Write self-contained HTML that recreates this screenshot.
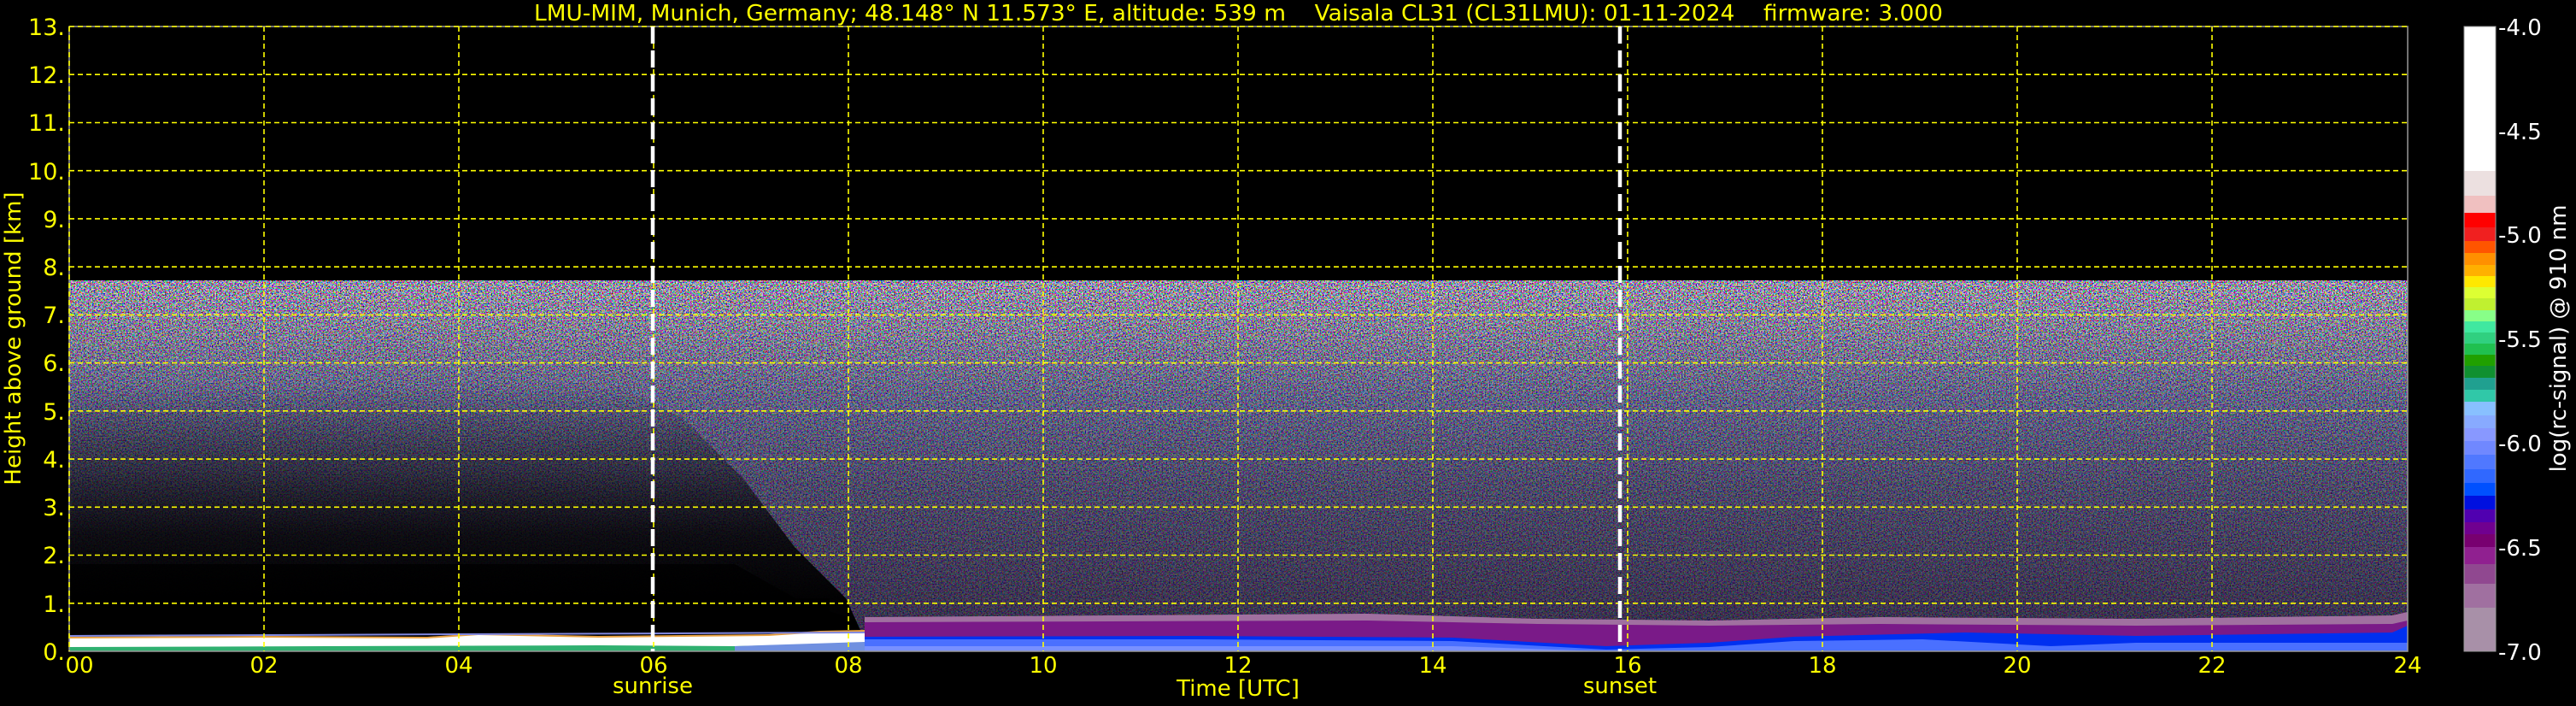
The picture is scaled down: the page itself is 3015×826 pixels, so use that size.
<!DOCTYPE html>
<html><head><meta charset="utf-8"><style>
html,body{margin:0;padding:0;background:#000;width:3015px;height:826px;overflow:hidden}
svg{display:block}
text{font-family:"DejaVu Sans","Liberation Sans",sans-serif}
</style></head><body>
<svg width="3015" height="826" viewBox="0 0 3015 826" xmlns="http://www.w3.org/2000/svg">
<defs>
<filter id="nz" x="81" y="328" width="2737" height="420" filterUnits="userSpaceOnUse" primitiveUnits="userSpaceOnUse">
<feTurbulence type="fractalNoise" baseFrequency="0.6" numOctaves="2" seed="11" result="t"/>
<feColorMatrix type="matrix" values="5 -0.5 -0.5 0 -1.5  -0.5 5 -0.5 0 -1.55  -0.5 -0.5 5 0 -1.4  0 0 0 0 1"/>
</filter>
<linearGradient id="dv" x1="0" y1="328" x2="0" y2="725" gradientUnits="userSpaceOnUse">
<stop offset="0" stop-color="#000" stop-opacity="0.05"/>
<stop offset="0.3" stop-color="#000" stop-opacity="0.25"/>
<stop offset="0.6" stop-color="#000" stop-opacity="0.42"/>
<stop offset="1" stop-color="#000" stop-opacity="0.55"/>
</linearGradient>
<linearGradient id="dl" x1="0" y1="450" x2="0" y2="700" gradientUnits="userSpaceOnUse">
<stop offset="0" stop-color="#000" stop-opacity="0"/>
<stop offset="0.4" stop-color="#000" stop-opacity="0.4"/>
<stop offset="0.7" stop-color="#000" stop-opacity="0.8"/>
<stop offset="1" stop-color="#000" stop-opacity="0.97"/>
</linearGradient>
<linearGradient id="tint" x1="0" y1="328" x2="0" y2="725" gradientUnits="userSpaceOnUse">
<stop offset="0" stop-color="#8080b0" stop-opacity="0.05"/>
<stop offset="0.35" stop-color="#5060d0" stop-opacity="0.3"/>
<stop offset="1" stop-color="#6040b0" stop-opacity="0.45"/>
</linearGradient>
</defs>

<!-- noise data -->
<rect x="81" y="328" width="2737" height="420" fill="#000" filter="url(#nz)"/>
<rect x="81" y="328" width="2737" height="420" fill="url(#tint)"/>
<rect x="81" y="328" width="2737" height="420" fill="url(#dv)"/>
<!-- dark lower-left region -->
<path d="M81,450 L720,450 L800,490 L870,560 L930,640 L990,700 L1012,748 L81,748 Z" fill="url(#dl)"/>
<path d="M81,660 L860,660 L940,705 L1000,725 L1012,748 L81,748 Z" fill="#000" opacity="0.75"/>
<rect x="81" y="700" width="890" height="50" fill="#000"/>

<!-- bottom layers left: white aerosol band -->
<path d="M81,745 L300,744 L500,745 L560,741 L700,744 L900,742 L960,738 L1012,737 L1012,762 L81,762 Z" fill="#e8a040"/>
<path d="M81,747 L300,746 L500,747 L560,743 L700,746 L900,744 L960,740 L1012,739 L1012,757 L81,757 Z" fill="#ffffff"/>
<path d="M81,757 L700,755 L860,756 L1012,752 L1012,762 L81,762 Z" fill="#30b070"/>
<path d="M860,756 L1012,751 L1012,762 L860,762 Z" fill="#7090e0"/>
<line x1="81" y1="744" x2="1012" y2="740" stroke="#8088e0" stroke-width="2"/>

<!-- right layers: purple + blue -->
<path d="M1012,722 L1300,720 L1600,718 L1800,724 L2000,726 L2200,722 L2500,724 L2800,720 L2818,716 L2818,762 L1012,762 Z" fill="#a070a0"/>
<path d="M1012,728 L1300,727 L1600,726 L1800,730 L2000,732 L2200,730 L2500,732 L2800,730 L2818,726 L2818,762 L1012,762 Z" fill="#7a1a88"/>
<path d="M1012,745 L1400,744 L1700,746 L1880,756 L2000,752 L2100,745 L2300,740 L2500,744 L2800,740 L2818,732 L2818,762 L1012,762 Z" fill="#0030f0"/>
<path d="M1012,748 L1400,748 L1700,750 L1880,760 L2000,757 L2100,750 L2250,748 L2400,756 L2500,752 L2818,752 L2818,762 L1012,762 Z" fill="#4a70ff"/>
<path d="M1012,756 L1700,756 L1880,762 L1012,762 Z" fill="#7890ff"/>

<!-- frame -->
<rect x="81" y="31" width="2737" height="731" fill="none" stroke="#999" stroke-width="1.5"/>

<!-- grid -->
<g stroke="#ffff00" stroke-width="1.6" stroke-dasharray="6,4" fill="none">
<line x1="81" y1="31" x2="2818" y2="31"/>
<line x1="81" y1="87.2" x2="2818" y2="87.2"/>
<line x1="81" y1="143.5" x2="2818" y2="143.5"/>
<line x1="81" y1="199.7" x2="2818" y2="199.7"/>
<line x1="81" y1="255.9" x2="2818" y2="255.9"/>
<line x1="81" y1="312.2" x2="2818" y2="312.2"/>
<line x1="81" y1="368.4" x2="2818" y2="368.4"/>
<line x1="81" y1="424.6" x2="2818" y2="424.6"/>
<line x1="81" y1="480.8" x2="2818" y2="480.8"/>
<line x1="81" y1="537.1" x2="2818" y2="537.1"/>
<line x1="81" y1="593.3" x2="2818" y2="593.3"/>
<line x1="81" y1="649.5" x2="2818" y2="649.5"/>
<line x1="81" y1="705.8" x2="2818" y2="705.8"/>
<line x1="81" y1="31" x2="81" y2="762"/>
<line x1="309" y1="31" x2="309" y2="762"/>
<line x1="537" y1="31" x2="537" y2="762"/>
<line x1="765" y1="31" x2="765" y2="762"/>
<line x1="993" y1="31" x2="993" y2="762"/>
<line x1="1221" y1="31" x2="1221" y2="762"/>
<line x1="1449" y1="31" x2="1449" y2="762"/>
<line x1="1677" y1="31" x2="1677" y2="762"/>
<line x1="1905" y1="31" x2="1905" y2="762"/>
<line x1="2133" y1="31" x2="2133" y2="762"/>
<line x1="2361" y1="31" x2="2361" y2="762"/>
<line x1="2589" y1="31" x2="2589" y2="762"/>
</g>

<!-- sunrise/sunset -->
<g stroke="#fff" stroke-width="4.5" stroke-dasharray="20,8">
<line x1="764" y1="31" x2="764" y2="762"/>
<line x1="1896" y1="31" x2="1896" y2="762"/>
</g>

<!-- title -->
<text x="625" y="24" fill="#ffff00" font-size="26" textLength="1649" lengthAdjust="spacingAndGlyphs" xml:space="preserve">LMU-MIM, Munich, Germany; 48.148° N 11.573° E, altitude: 539 m    Vaisala CL31 (CL31LMU): 01-11-2024    firmware: 3.000</text>

<!-- y tick labels -->
<g fill="#ffff00" font-size="27" text-anchor="end">
<text x="76" y="41">13.</text>
<text x="76" y="97">12.</text>
<text x="76" y="153">11.</text>
<text x="76" y="210">10.</text>
<text x="76" y="266">9.</text>
<text x="76" y="322">8.</text>
<text x="76" y="378">7.</text>
<text x="76" y="434">6.</text>
<text x="76" y="491">5.</text>
<text x="76" y="547">4.</text>
<text x="76" y="603">3.</text>
<text x="76" y="659">2.</text>
<text x="76" y="716">1.</text>
<text x="76" y="772">0.</text>
</g>
<text transform="translate(24,396) rotate(-90)" fill="#ffff00" font-size="26" text-anchor="middle">Height above ground [km]</text>

<!-- x tick labels -->
<g fill="#ffff00" font-size="26" text-anchor="middle">
<text x="93" y="787">00</text>
<text x="309" y="787">02</text>
<text x="537" y="787">04</text>
<text x="765" y="787">06</text>
<text x="993" y="787">08</text>
<text x="1221" y="787">10</text>
<text x="1449" y="787">12</text>
<text x="1677" y="787">14</text>
<text x="1905" y="787">16</text>
<text x="2133" y="787">18</text>
<text x="2361" y="787">20</text>
<text x="2589" y="787">22</text>
<text x="2818" y="787">24</text>
<text x="764" y="811">sunrise</text>
<text x="1896" y="811">sunset</text>
<text x="1449" y="814">Time [UTC]</text>
</g>

<!-- colorbar -->
<g shape-rendering="crispEdges">
<rect x="2884" y="31" width="37" height="170" fill="#ffffff"/>
<rect x="2884" y="200" width="37" height="29" fill="#ece0e0"/>
<rect x="2884" y="229" width="37" height="20" fill="#f0c0c0"/>
<rect x="2884" y="249" width="37" height="17" fill="#ff0000"/>
<rect x="2884" y="266" width="37" height="16" fill="#f02020"/>
<rect x="2884" y="282" width="37" height="14" fill="#ff5500"/>
<rect x="2884" y="296" width="37" height="14" fill="#ff9000"/>
<rect x="2884" y="310" width="37" height="13" fill="#ffb000"/>
<rect x="2884" y="323" width="37" height="13" fill="#ffe800"/>
<rect x="2884" y="336" width="37" height="13" fill="#ddff33"/>
<rect x="2884" y="349" width="37" height="14" fill="#c0f030"/>
<rect x="2884" y="363" width="37" height="13" fill="#88ff88"/>
<rect x="2884" y="376" width="37" height="13" fill="#40e8a0"/>
<rect x="2884" y="389" width="37" height="13" fill="#30d080"/>
<rect x="2884" y="402" width="37" height="13" fill="#20c050"/>
<rect x="2884" y="415" width="37" height="13" fill="#20a000"/>
<rect x="2884" y="428" width="37" height="14" fill="#109030"/>
<rect x="2884" y="442" width="37" height="14" fill="#20a090"/>
<rect x="2884" y="456" width="37" height="14" fill="#30c8a8"/>
<rect x="2884" y="470" width="37" height="16" fill="#88c0ff"/>
<rect x="2884" y="486" width="37" height="15" fill="#88aaff"/>
<rect x="2884" y="501" width="37" height="15" fill="#8898ff"/>
<rect x="2884" y="516" width="37" height="16" fill="#7088ff"/>
<rect x="2884" y="532" width="37" height="17" fill="#5078ff"/>
<rect x="2884" y="549" width="37" height="16" fill="#3068ff"/>
<rect x="2884" y="565" width="37" height="15" fill="#0050ff"/>
<rect x="2884" y="580" width="37" height="16" fill="#0010e0"/>
<rect x="2884" y="596" width="37" height="15" fill="#5000b0"/>
<rect x="2884" y="611" width="37" height="14" fill="#700090"/>
<rect x="2884" y="625" width="37" height="15" fill="#780070"/>
<rect x="2884" y="640" width="37" height="20" fill="#902090"/>
<rect x="2884" y="660" width="37" height="23" fill="#904890"/>
<rect x="2884" y="683" width="37" height="28" fill="#a070a0"/>
<rect x="2884" y="711" width="37" height="51" fill="#a890a8"/>
</g>
<rect x="2884" y="31" width="37" height="731" fill="none" stroke="#999" stroke-width="1"/>
<g fill="#fff" font-size="26">
<text x="2924" y="41">-4.0</text>
<text x="2924" y="163">-4.5</text>
<text x="2924" y="284">-5.0</text>
<text x="2924" y="406">-5.5</text>
<text x="2924" y="528">-6.0</text>
<text x="2924" y="650">-6.5</text>
<text x="2924" y="772">-7.0</text>
</g>
<text transform="translate(3003,396) rotate(-90)" fill="#fff" font-size="26" text-anchor="middle">log(rc-signal) @ 910 nm</text>
</svg>
</body></html>
